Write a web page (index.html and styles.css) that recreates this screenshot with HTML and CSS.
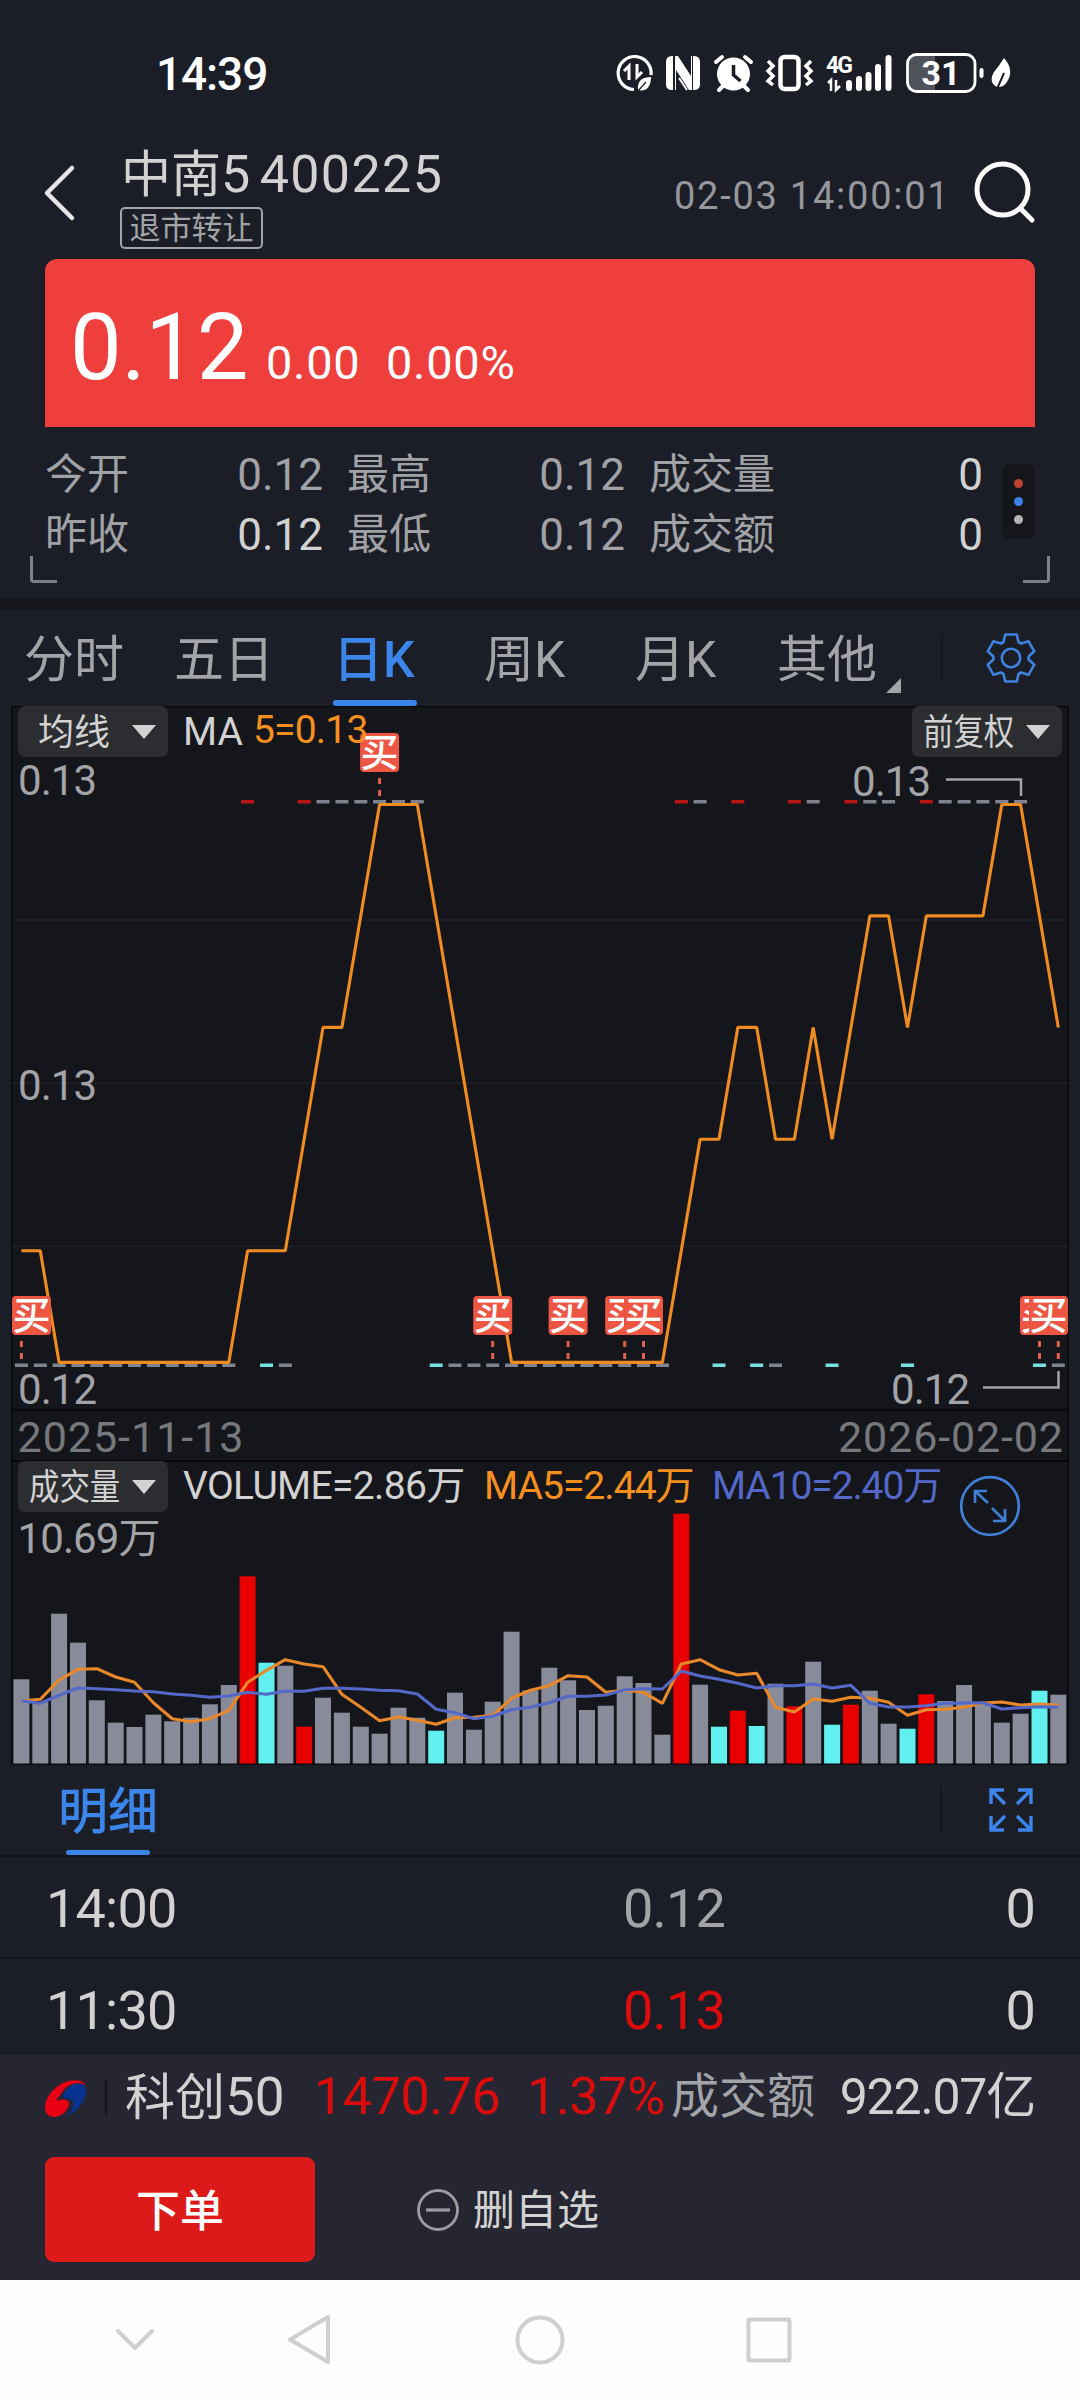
FILE: index.html
```html
<!DOCTYPE html>
<html lang="zh-CN">
<head>
<meta charset="utf-8">
<title>中南5 400225</title>
<link rel="stylesheet" href="styles.css">
</head>
<body>
<div class="app">
  <header class="status">
    <span class="clock">14:39</span>
    <svg class="status-icons" width="400" height="46" viewBox="612 50 400 46" fill="none" stroke="#fff">
      <path d="M651 75 A16.5 16.5 0 1 0 634 89.500" stroke-width="3.200"/>
      <path d="M624 71l5-5v14M637 64v13l5-5" stroke-width="3"/>
      <path d="M638 90c-1-10 5-13 13-13c0 9-4 15-13 13z" fill="#fff" stroke="none"/>
      <path d="M638 91l8-9" stroke="#1b1e27" stroke-width="1.200"/>
      <path d="M673 56h-1q-6 0-6 6v22q0 6 6 6h1zM693 56h1q6 0 6 6v22q0 6-6 6h-1z" fill="#fff" stroke="none"/>
      <path d="M675 56h3l13 20v-20h1v34h-3l-13-20v20h-1z" fill="#fff" stroke="none"/>
      <path d="M679 68l11 17M679 78l8 12" stroke="#fff" stroke-width="2"/>
      <circle cx="733.500" cy="74" r="16.500" fill="#fff" stroke="none"/>
      <path d="M716 62l6-5M751 62l-6-5M724 85l-5 5M743 85l5 5" stroke-width="4" stroke-linecap="round"/>
      <path d="M733.500 65v10l7 6" stroke="#1b1e27" stroke-width="3.500"/>
      <rect x="780.500" y="57" width="18" height="32" rx="4" stroke-width="4.500"/>
      <path d="M768 61l5 5-5 5 5 5-5 5 5 4M811 61l-5 5 5 5-5 5 5 5-5 4" stroke-width="3.500"/>
      <text x="826" y="73" class="net-label" textLength="27">4G</text>
      <path d="M828 83l3-3v11M836 80v10l4-4" stroke-width="2.500"/>
      <path d="M849 83v5M859 79v9M868.500 75v13M878 67v21M888.500 58v30" stroke-width="6" stroke-linecap="round"/>
      <path d="M909 56h26v34h-26q-1 0-1-2v-30z" fill="#50525a" stroke="none"/>
      <rect x="907.500" y="54.500" width="67.500" height="37" rx="9" stroke-width="2.800"/>
      <text x="941" y="85" text-anchor="middle" class="battery-label">31</text>
      <path d="M981.500 70v6" stroke-width="4" stroke-linecap="round"/>
      <path d="M1004 58q9 10 5 20q-4 10-12 9q-9-5-3-15q5-6 10-14z" fill="#fff" stroke="none"/>
      <path d="M997 89l7-16" stroke="#1b1e27" stroke-width="2"/>
    </svg>
  </header>

  <div class="title-bar">
    <svg class="back" width="34" height="60" viewBox="0 0 34 60" fill="none" stroke="#e6e6e6" stroke-width="4.500" stroke-linecap="round" stroke-linejoin="round"><path d="M29 5L4 30l25 25"/></svg>
    <div class="name-block">
      <div class="name"><span>中南<i class="digit">5</i></span><span class="code">400225</span></div>
      <span class="badge">退市转让</span>
    </div>
    <span class="stamp">02-03 14:00:01</span>
    <svg class="search" width="64" height="64" viewBox="0 0 64 64" fill="none" stroke="#fafafa" stroke-width="5" stroke-linecap="round"><circle cx="29.500" cy="29.500" r="25.500"/><path d="M47 48l12 12"/></svg>
  </div>

  <div class="price-card">
    <span class="last">0.12</span><span class="chg">0.00</span><span class="chg">0.00%</span>
  </div>

  <section class="quote">
    <div class="stats">
      <span>今开</span><b>0.12</b><span>最高</span><b>0.12</b><span>成交量</span><b class="lit">0</b>
      <span>昨收</span><b class="lit">0.12</b><span>最低</span><b>0.12</b><span>成交额</span><b class="lit">0</b>
    </div>
    <div class="more"><i class="dot red"></i><i class="dot blue"></i><i class="dot grey"></i></div>
    <i class="corner left"></i><i class="corner right"></i>
  </section>

  <nav class="tabs">
    <span class="tab">分时</span><span class="tab">五日</span><span class="tab active">日K</span><span class="tab">周K</span><span class="tab">月K</span><span class="tab other">其他</span>
    <i class="rule"></i>
    <svg class="gear" width="54" height="54" viewBox="-27 -27 54 54" fill="none" stroke="#3f82e0" stroke-width="2.600" stroke-linejoin="round"><path d="M-7.500-16L-5.800-23.500H5.800L7.500-16 10.100-14.500 17.500-16.800 23.300-6.700 17.600-1.500V1.500L23.300 6.700 17.500 16.800 10.100 14.500 7.500 16 5.800 23.500H-5.800L-7.500 16-10.100 14.500-17.500 16.800-23.300 6.700-17.600 1.500V-1.500L-23.300-6.700-17.500-16.800-10.100-14.500z"/><circle r="9.200"/></svg>
  </nav>

  <section class="charts">
    <svg class="plot" id="plot" width="1080" height="1060" viewBox="0 706 1080 1060"></svg>
    <div class="overlay">
      <div class="legend price">
        <span class="picker"><em>均线</em><i class="caret"></i></span>
        <span class="ma">MA</span><span class="ma5">5=0.13</span>
        <span class="picker adjust"><em>前复权</em><i class="caret"></i></span>
      </div>
      <div class="legend volume">
        <span class="picker tight"><em>成交量</em><i class="caret"></i></span>
        <span class="vol">VOLUME=2.86万</span><span class="vma5">MA5=2.44万</span><span class="vma10">MA10=2.40万</span>
      </div>
    </div>
  </section>

  <div class="detail-head">
    <span class="detail-tab">明细</span>
    <i class="rule"></i>
    <svg class="expand" width="44" height="44" viewBox="0 0 44 44" fill="none" stroke="#3c85ea" stroke-width="3.400"><path d="M2 16V2h13M2 2l14 14M42 16V2H29M42 2L28 16M2 28v14h13M2 42l14-14M42 28v14H29M42 42L28 28"/></svg>
  </div>
  <div class="tick"><span>14:00</span><span class="flat">0.12</span><span class="qty">0</span></div>
  <div class="tick second"><span>11:30</span><span class="up">0.13</span><span class="qty">0</span></div>

  <footer class="dock">
    <div class="index">
      <svg class="logo" width="42" height="41" viewBox="45 31 126 123"><path fill="#e80012" d="M45 120C48 85 85 42 135 41C158 41 166 50 164 56C150 44 115 50 100 72C88 90 80 95 81 102C95 96 115 98 117 110C117 125 100 150 75 151C55 151 44 140 45 120z"/><path fill="#07328f" d="M104 78C115 55 140 47 155 52C172 62 172 80 160 100C148 125 130 140 112 147C122 135 135 115 130 105C122 92 105 100 100 92C98 87 101 82 104 78z"/></svg>
      <i class="sep"></i>
      <span class="idx-name">科创<i class="digit">50</i></span><span class="idx-val">1470.76</span><span class="idx-pct">1.37%</span><span class="idx-label">成交额</span><span class="idx-amt">922.07亿</span>
    </div>
    <div class="actions">
      <button class="order">下单</button>
      <svg width="44" height="44" viewBox="0 0 44 44" fill="none" stroke="#9c9da2" stroke-width="2.800"><circle cx="22" cy="22" r="19.500"/><path d="M10 22h24" stroke-width="3.200"/></svg>
      <span class="remove">删自选</span>
    </div>
  </footer>

  <div class="sysnav">
    <svg width="1080" height="120" viewBox="0 2280 1080 120" fill="none" stroke="#cfcfcf" stroke-width="4" stroke-linejoin="round" stroke-linecap="round"><path d="M118 2331l17 17 17-17M328 2317v45l-38-22.500z"/><circle cx="540" cy="2340" r="22.500"/><rect x="748.500" y="2319.500" width="41" height="41" rx="1"/></svg>
  </div>
</div>
<script src="chart.js"></script>
</body>
</html>
```
FILE: styles.css
```css
* { box-sizing: border-box; }
body { margin: 0; background: #1b1e27; }
i, em { font-style: normal; }
b { font-weight: 400; }
.app {
  width: 1080px; height: 2400px; overflow: hidden;
  display: flex; flex-direction: column;
  background: #1b1e27; color: #d2d2d2;
  font-family: Roboto, "Noto Sans CJK SC", sans-serif;
}
.app > * { flex: none; }
span, em { white-space: nowrap; }

.status { height: 148px; padding: 50px 68px 0 156px; display: flex; justify-content: space-between; }
.clock { font-size: 46px; font-weight: 500; line-height: 48px; letter-spacing: -1.1px; color: #fff; }
.net-label { font: 700 23px Roboto, sans-serif; fill: #fff; stroke: none; }
.battery-label { font: 700 34px Roboto, sans-serif; fill: #fff; stroke: none; }

.title-bar { height: 111px; display: flex; align-items: flex-start; padding-left: 43px; }
.back { margin-top: 15px; }
.name-block { width: 400px; margin-left: 43px; display: flex; flex-direction: column; align-items: flex-start; }
.name { display: flex; gap: 8px; font-size: 50px; line-height: 54px; height: 59px; padding: 0 0 0 1px; color: #d2d2d2; }
.name .digit, .code { font-size: 52px; letter-spacing: 1.4px; }
.badge { border: 2px solid #a3a4a8; border-radius: 5px; height: 42px; width: 143px; line-height: 39px; font-size: 31px; text-align: center; color: #a3a4a8; }
.stamp { margin-left: 154px; margin-top: 23px; width: 290px; font-size: 38px; line-height: 50px; letter-spacing: 1.75px; color: #96979c; }
.search { margin-left: 9px; margin-top: 12px; }

.price-card { margin: 0 45px; height: 168px; border-radius: 12px 12px 0 0; background: #ef3f3d; color: #fff; display: flex; align-items: baseline; padding: 34px 0 0 25px; }
.last { font-size: 92px; line-height: 110px; width: 196px; letter-spacing: -.3px; }
.chg { font-size: 47px; width: 120px; letter-spacing: .7px; }

.quote { position: relative; height: 171px; padding: 17px 45px 0; display: flex; justify-content: space-between; }
.stats { width: 940px; display: grid; grid-template-columns: 130px 148px 174px 128px 174px 184px; grid-auto-rows: 60px; font-size: 42px; line-height: 61px; color: #a1a2a6; }
.stats span:nth-of-type(3n+2), .stats span:nth-of-type(3n) { padding-left: 24px; }
.stats b { text-align: right; font-size: 44px; line-height: 62px; }
.stats .lit { color: #d2d2d2; }
.more { width: 33px; height: 75px; margin-top: 20px; border-radius: 8px; background: #15161b; display: flex; flex-direction: column; align-items: center; justify-content: center; gap: 9px; }
.dot { width: 9px; height: 9px; border-radius: 50%; }
.dot.red { background: #c0432f; }
.dot.blue { background: #3c82e6; }
.dot.grey { background: #b4b4b4; }
.corner { position: absolute; top: 129px; width: 27px; height: 27px; border: 0 solid #7e8085; border-bottom-width: 3px; }
.corner.left { left: 30px; border-left-width: 3px; border-bottom-left-radius: 4px; }
.corner.right { right: 30px; border-right-width: 3px; border-bottom-right-radius: 4px; }

.tabs { height: 108px; border-top: 12px solid #15161b; display: flex; font-size: 50px; line-height: 101px; color: #a3a4a8; padding-left: 24px; }
.tab { width: 150px; height: 96px; position: relative; }
.tab:nth-child(3) { width: 160px; padding-left: 9px; }
.tab:nth-child(4) { width: 151px; }
.tab:nth-child(5) { width: 142px; }
.tab.active { color: #3c85ea; font-weight: 500; }
.tab.active::after { content: ""; position: absolute; left: 9px; bottom: 0; width: 84px; height: 6px; border-radius: 3px; background: #3c85ea; }
.tab.other { width: 164px; }
.tab.other::after { content: ""; position: absolute; left: 109px; top: 68px; border-left: 15px solid transparent; border-bottom: 15px solid #a3a4a8; }
.rule { width: 2px; height: 46px; margin-top: 25px; background: #15161b; }
.gear { margin: 21px 0 0 41px; }

.charts { display: grid; height: 1058px; }
.plot, .overlay { grid-area: 1 / 1; }
.overlay { display: flex; flex-direction: column; justify-content: flex-start; padding: 0 18px; z-index: 1; }
.legend { display: flex; height: 51px; line-height: 51px; }
.legend.volume { margin-top: 704px; font-size: 39px; }
.picker { width: 150px; height: 51px; border-radius: 7px; background: #2c2d31; color: #d2d2d2; font-size: 36px; display: flex; align-items: center; padding-left: 20px; line-height: 50px; }
.picker em { width: 94px; padding-top: 2px; }
.caret { border: 12px solid transparent; border-top: 14px solid #d2d2d2; border-bottom: 0; }
.picker.adjust, .picker.tight { padding-left: 11px; }
.picker.adjust em, .picker.tight em { width: 103px; transform: scaleX(.845); transform-origin: 0 50%; }
.picker.adjust { margin-left: auto; }
.ma { margin-left: 15px; width: 70px; font-size: 39px; line-height: 53px; }
.ma5 { font-size: 39px; color: #f5901e; letter-spacing: -.8px; line-height: 49px; }
.vol { margin-left: 15px; width: 301px; letter-spacing: -.65px; }
.vma5 { width: 228px; color: #f5901e; letter-spacing: -.95px; }
.vma10 { color: #5468c8; letter-spacing: -1.1px; }
.label { font: 42px Roboto, "Noto Sans CJK SC", sans-serif; fill: #a3a4a8; }
.date { font: 43px Roboto, sans-serif; fill: #77787b; }
.buy { font: 500 38px "Noto Sans CJK SC", sans-serif; fill: #fff; }

.detail-head { height: 93px; border-bottom: 2px solid #15161b; display: flex; padding-left: 58px; }
.detail-tab { width: 882px; height: 91px; font-size: 50px; line-height: 96px; color: #3c85ea; position: relative; font-weight: 500; }
.detail-tab::after { content: ""; position: absolute; left: 8px; bottom: 0; width: 84px; height: 5px; border-radius: 3px; background: #3c85ea; }
.detail-head .rule { margin-top: 23px; }
.expand { margin: 24px 0 0 47px; }
.tick { height: 102px; border-bottom: 2px solid #15161b; display: grid; grid-template-columns: 563px 180px 1fr; padding: 0 45px 0 46px; font-size: 54px; line-height: 103px; letter-spacing: -.8px; }
.tick span:nth-child(2) { padding-left: 14px; }
.tick.second { height: 96px; border: 0; }
.flat { color: #a3a4a8; }
.up { color: #dc0c0c; }
.qty { text-align: right; }

.dock { height: 225px; background: #252631; }
.index { display: flex; align-items: center; height: 84px; padding: 0 45px; white-space: nowrap; }
.sep { width: 2px; height: 36px; margin: 0 18px 0 18px; background: #15161b; }
.index span { line-height: 84px; }
.idx-name { width: 189px; font-size: 50px; }
.idx-name .digit { font-size: 53px; }
.idx-val, .idx-pct { font-size: 52px; color: #dc0c0c; }
.idx-val { width: 213px; letter-spacing: -.4px; }
.idx-pct { width: 144px; letter-spacing: -.3px; }
.idx-label { font-size: 48px; color: #a3a4a8; width: 144px; }
.idx-amt { font-size: 50px; margin-left: auto; letter-spacing: -1.2px; }
.actions { display: flex; align-items: center; padding: 18px 45px 0; }
.order { width: 270px; height: 105px; border: 0; border-radius: 9px; background: #dd1a1a; color: #fff; font: 500 44px "Noto Sans CJK SC", sans-serif; padding: 0 0 3px; margin-right: 101px; }
.remove { margin-left: 13px; font-size: 42px; line-height: 100px; padding-top: 2px; }
.sysnav { height: 120px; background: #fdfdfd; }
.sysnav svg { display: block; }
```
FILE: chart.js
```js
const plot = document.getElementById('plot');
const X0 = 21.4, STEP = 18.853, BASE = 1764;
const GREY = '#888b99', RED = '#e80000', CYAN = '#62efef';
const x = i => +(X0 + STEP * i).toFixed(1);

// Volume bar heights, in thirds of a pixel, one per trading day
const volume = [254,186,451,364,191,124,111,148,128,139,179,237,563,304,295,112,199,154,112,91,169,139,100,214,103,187,397,221,289,251,162,175,263,243,88,751,238,112,160,114,241,173,307,118,178,220,121,106,209,189,237,183,124,151,220,208];
const up = [12, 15, 35, 38, 41, 44, 48];
const down = [13, 22, 37, 39, 43, 47, 54];
const high = [12, 15, 16, 17, 18, 19, 20, 21, 35, 36, 38, 41, 42, 44, 45, 46, 48, 49, 50, 51, 52, 53];

const L = [1362.4, 1250.8, 1139.2, 1027.4, 915.9, 804.5];
const ma = [[0,1],[1,1],[2,0],[11,0],[12,1],[14,1],[16,3],[17,3],[19,5],[21,5],[26,0],[34,0],[36,2],[37,2],[38,3],[39,3],[40,2],[41,2],[42,3],[43,2],[45,4],[46,4],[47,3],[48,4],[51,4],[52,5],[53,5],[55,3]];
const v5 = [903,898,840,808,806,831,847,908,956,965,956,931,847,811,779,792,800,883,922,962,951,961,973,953,952,946,895,871,857,827,831,877,870,877,910,792,779,809,825,820,922,936,897,904,892,895,907,946,929,928,922,909,906,915,912,916];
const v10 = [902,910,886,864,866,869,873,875,882,886,892,888,877,883,873,874,865,865,867,871,872,882,928,938,956,949,929,922,908,889,889,885,869,866,867,813,828,838,850,864,857,857,852,864,856,910,921,921,917,910,909,908,927,923,920,921];
const buys = [[0, 0], [19, 1], [25, 0], [29, 0], [32, 0], [33, 0], [54, 0], [55, 0]];

const color = i => up.includes(i) ? RED : down.includes(i) ? CYAN : GREY;
const line = (pts, stroke) => `<polyline points="${pts.join(' ')}" fill="none" stroke="${stroke}" stroke-width="3.1" stroke-linejoin="bevel"/>`;

let s = '<rect x="12" y="706.500" width="1056" height="1057.500" fill="#15161b" stroke="#08090b" stroke-width="1.500"/>';
for (const y of [920, 1083, 1246.500]) s += `<path d="M12 ${y}H1068" stroke="#212227" stroke-width="1.500"/>`;
for (const y of [1410, 1461]) s += `<path d="M12 ${y}H1068" stroke="#08090b" stroke-width="2"/>`;

volume.forEach((h, i) => {
  const c = color(i);
  const dashY = high.includes(i) ? 800 : 1363.500;
  const dashColor = c === RED ? '#b91414' : c === CYAN ? '#76dfe2' : '#7f828f';
  s += `<rect x="${x(i) - 6.5}" y="${dashY}" width="13" height="3.5" fill="${dashColor}"/>`;
  s += `<rect x="${x(i) - 8}" y="${(BASE - h / 3).toFixed(1)}" width="16" height="${(h / 3 - .5).toFixed(1)}" fill="${c}"/>`;
});

s += '<text class="label" x="18" y="795" textLength="79">0.13</text><text class="label" x="18" y="1100" textLength="79">0.13</text><text class="label" x="18" y="1403.500" textLength="79">0.12</text>';
s += '<text class="label" x="852" y="796" textLength="79">0.13</text><text class="label" x="891" y="1403.500" textLength="79">0.12</text>';
s += '<path d="M946 779.500H1021V796M983 1387.500H1058.500V1371" fill="none" stroke="#a3a4a8" stroke-width="2.500"/>';
s += '<text class="date" x="17.500" y="1452" textLength="226">2025-11-13</text><text class="date" x="838" y="1452" textLength="225">2026-02-02</text>';
s += '<text class="label" x="17.500" y="1552.500" textLength="143">10.69万</text>';

s += line(ma.map(([i, l]) => `${x(i)},${L[l]}`), '#ee8c22');
s += line(v5.map((v, i) => `${x(i)},${(1400 + v / 3).toFixed(1)}`), '#e8882a');
s += line(v10.map((v, i) => `${x(i)},${(1400 + v / 3).toFixed(1)}`), '#5468c8');

for (const [i, top] of buys) {
  const cx = Math.min(Math.max(x(i), 31.5), 1048.500);
  const y = top ? 733 : 1296;
  s += `<path d="M${x(i)} ${y + 45}v6m0 6v6" stroke="#e0604f" stroke-width="3"/>`;
  s += `<rect x="${cx - 19.5}" y="${y}" width="39" height="39" rx="4" fill="#ee5644"/>`;
  s += `<text class="buy" x="${cx}" y="${y + 33}" text-anchor="middle">买</text>`;
}

s += '<g fill="none" stroke="#3f7fd6" stroke-width="2.700"><circle cx="990" cy="1506" r="28.800"/><path d="M988 1503l-13-12m0 12v-12h12M992 1508l13 13m0-12v12h-12"/></g>';
plot.innerHTML = s;
```
